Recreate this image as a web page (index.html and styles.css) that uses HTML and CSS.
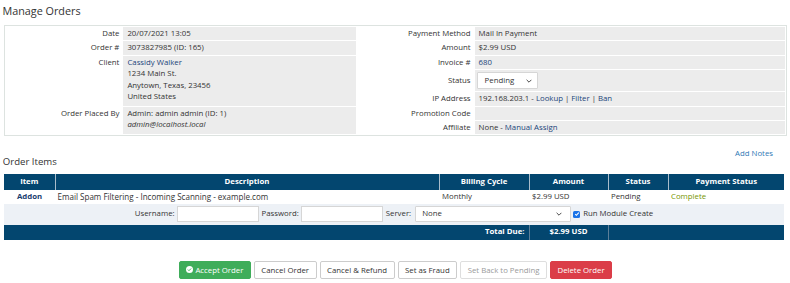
FILE: index.html
```html
<!DOCTYPE html>
<html lang="en">
<head>
<meta charset="utf-8">
<title>Manage Orders</title>
<link rel="stylesheet" href="styles.css">
</head>
<body>
<div class="page">
  <h1 class="page-title">Manage Orders</h1>

  <div class="info-box">
    <table class="info-table">
      <tr>
        <td class="lbl w15">Date</td><td class="val w30">20/07/2021 13:05</td>
        <td class="lbl w15">Payment Method</td><td class="val w40">Mail In Payment</td>
      </tr>
      <tr>
        <td class="lbl">Order #</td><td class="val">3073827985 (ID: 165)</td>
        <td class="lbl">Amount</td><td class="val">$2.99 USD</td>
      </tr>
      <tr>
        <td class="lbl top" rowspan="3">Client</td>
        <td class="val top" rowspan="3"><a href="#">Cassidy Walker</a><br>1234 Main St.<br>Anytown, Texas, 23456<br>United States</td>
        <td class="lbl">Invoice #</td><td class="val"><a href="#">680</a></td>
      </tr>
      <tr>
        <td class="lbl">Status</td>
        <td class="val sel-cell">
          <div class="fake-select status-select"><span>Pending</span><svg width="6" height="4" viewBox="0 0 10 6"><path d="M1 1l4 4 4-4" stroke="#444" stroke-width="1.6" fill="none"/></svg></div>
        </td>
      </tr>
      <tr>
        <td class="lbl">IP Address</td>
        <td class="val">192.168.203.1 - <a href="#">Lookup</a> | <a href="#">Filter</a> | <a href="#">Ban</a></td>
      </tr>
      <tr>
        <td class="lbl top" rowspan="2">Order Placed By</td>
        <td class="val top" rowspan="2">Admin: admin admin (ID: 1)<br><em>admin@localhost.local</em></td>
        <td class="lbl">Promotion Code</td><td class="val"></td>
      </tr>
      <tr>
        <td class="lbl">Affiliate</td><td class="val">None - <a href="#">Manual Assign</a></td>
      </tr>
    </table>
  </div>

  <div class="items-head">
    <h2 class="section-title">Order Items</h2>
    <a href="#" class="add-notes">Add Notes</a>
  </div>

  <table class="items">
    <colgroup>
      <col class="c-item"><col class="c-desc"><col class="c-cycle"><col class="c-amt"><col class="c-status"><col class="c-pay">
    </colgroup>
    <thead>
      <tr><th>Item</th><th>Description</th><th>Billing Cycle</th><th>Amount</th><th>Status</th><th>Payment Status</th></tr>
    </thead>
    <tbody>
      <tr class="item-row">
        <td class="item-type">Addon</td>
        <td class="item-desc">Email Spam Filtering - Incoming Scanning - example.com</td>
        <td>Monthly</td>
        <td>$2.99 USD</td>
        <td>Pending</td>
        <td class="complete">Complete</td>
      </tr>
      <tr class="module-row">
        <td colspan="6">
          <div class="module-fields">
            <label class="mf-label">Username:</label><span class="text-input"></span>
            <label class="mf-label">Password:</label><span class="text-input"></span>
            <label class="mf-label">Server:</label>
            <div class="fake-select server-select"><span>None</span><svg width="6" height="4" viewBox="0 0 10 6"><path d="M1 1l4 4 4-4" stroke="#444" stroke-width="1.6" fill="none"/></svg></div>
            <span class="checkbox"><svg width="6" height="6" viewBox="0 0 10 10"><path d="M2 5.2l2 2 4-4.4" stroke="#fff" stroke-width="1.8" fill="none"/></svg></span>
            <span class="mf-check-label">Run Module Create</span>
          </div>
        </td>
      </tr>
      <tr class="total-row">
        <td colspan="3" class="total-label">Total Due:</td>
        <td class="total-amt">$2.99 USD</td>
        <td colspan="2" class="total-rest"></td>
      </tr>
    </tbody>
  </table>

  <div class="actions">
    <button class="btn btn-success"><svg width="7" height="7" viewBox="0 0 16 16"><circle cx="8" cy="8" r="8" fill="#fff"/><path d="M4.3 8.2l2.5 2.5 4.9-5" stroke="#3fad5a" stroke-width="2.2" fill="none"/></svg>Accept Order</button>
    <button class="btn">Cancel Order</button>
    <button class="btn">Cancel &amp; Refund</button>
    <button class="btn">Set as Fraud</button>
    <button class="btn btn-disabled">Set Back to Pending</button>
    <button class="btn btn-danger">Delete Order</button>
  </div>
</div>
</body>
</html>
```

FILE: styles.css
```css
* { box-sizing: border-box; }
html, body { margin: 0; padding: 0; background: #fff; }
body {
  font-family: "Open Sans", "DejaVu Sans", sans-serif;
  font-size: 7.8px;
  line-height: 11.4px;
  color: #333;
}
a { color: #1b447a; text-decoration: none; }
em { font-style: italic; }

.page { width: 790px; }

.page-title {
  font-size: 10.8px;
  font-weight: 400;
  line-height: 14px;
  margin: 3.5px 0 7.5px 2.5px;
  color: #333;
}

/* info box */
.info-box {
  margin: 0 3px 0 4px;
  border: 1px solid #dde3e0;
}
.info-table {
  width: 100%;
  border-collapse: separate;
  border-spacing: 1px;
}
.info-table td {
  padding: 1px 3px;
  vertical-align: middle;
}
.info-table td.top { vertical-align: top; }
.info-table .lbl { text-align: right; color: #333; }
.info-table .val { background: #ececec; padding-left: 4px; }
.w15 { width: 15%; }
.w30 { width: 30%; }
.w40 { width: 40%; }
.info-table .sel-cell { padding: 2px 3px 2px 2.5px; }

.fake-select {
  display: flex;
  align-items: center;
  justify-content: space-between;
  background: #fff;
  border: 1px solid #d6d6d6;
  border-radius: 1px;
  color: #333;
}
.status-select { width: 61px; height: 17px; padding: 0 5px 0 6.5px; }
.server-select { width: 156px; height: 15.5px; padding: 0 8px 0 6px; }

/* items heading */
.items-head {
  display: flex;
  justify-content: space-between;
  align-items: flex-start;
  margin-top: 12px;
}
.section-title {
  font-size: 9.6px;
  font-weight: 400;
  line-height: 12px;
  margin: 7.2px 0 0 2.8px;
  color: #333;
}
.add-notes { margin-right: 17px; color: #2f78b5; }

/* items table */
.items {
  margin: 6px 0 0 4px;
  width: 780px;
  table-layout: fixed;
  border-collapse: collapse;
}
.c-item { width: 51px; }
.c-desc { width: 384px; }
.c-cycle { width: 90px; }
.c-amt { width: 79px; }
.c-status { width: 60px; }
.c-pay { width: 116px; }

.items th {
  background: #03466f;
  color: #fff;
  font-weight: 700;
  text-align: center;
  height: 16px;
  padding: 0 3px;
  border-left: 1px solid #a9bccb;
}
.items th:first-child { border-left: 0; }

.item-row td {
  height: 14px;
  padding: 0 3px;
  white-space: nowrap;
}
.item-row td.item-type {
  text-align: center;
  font-weight: 700;
  color: #1b3e70;
}
.item-row td.item-desc { font-size: 8.05px; padding-left: 2.5px; }
.item-row td.complete { color: #779500; }

.module-row td {
  background: #edf1f6;
  height: 21px;
  padding: 0;
}
.module-fields {
  display: flex;
  justify-content: center;
  align-items: center;
}
.mf-label { margin-right: 2px; }
.text-input {
  display: block;
  width: 82px;
  height: 15.5px;
  background: #fff;
  border: 1px solid #d6d6d6;
  margin-right: 3px;
}
.server-select { margin-left: 2px; margin-right: 2px; }
.checkbox {
  display: flex;
  align-items: center;
  justify-content: center;
  width: 7px;
  height: 7px;
  border-radius: 1.5px;
  background: #1a73e8;
  margin-right: 3px;
}

.total-row td {
  background: #03466f;
  color: #fff;
  font-weight: 700;
  height: 15px;
  padding: 0 4px;
}
.total-row .total-label { text-align: right; }
.total-row .total-amt { text-align: center; border-left: 1px solid #5d7f98; }
.total-row .total-rest { border-left: 1px solid #5d7f98; }

/* actions */
.actions {
  display: flex;
  justify-content: center;
  gap: 3px;
  margin-top: 21px;
  padding-left: 1px;
}
.btn {
  display: flex;
  align-items: center;
  gap: 2px;
  height: 18px;
  padding: 0 6.5px;
  font-family: "Open Sans", "DejaVu Sans", sans-serif;
  font-size: 7.8px;
  color: #333;
  background: #fff;
  border: 1px solid #ccc;
  border-radius: 2px;
}
.btn-success { background: #3fad5a; border-color: #3fad5a; color: #fff; }
.btn-danger { background: #db3d48; border-color: #db3d48; color: #fff; }
.btn-disabled { color: #9a9a9a; border-color: #dedede; }
```
